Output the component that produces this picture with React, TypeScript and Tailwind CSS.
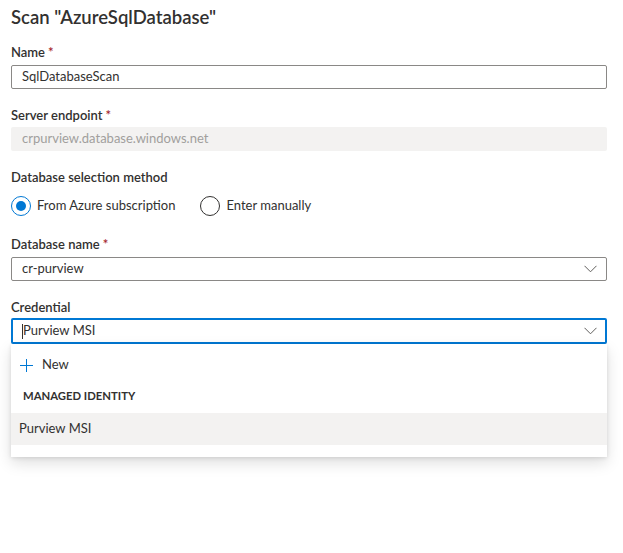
import React from 'react';

const font = { fontFamily: 'Lato, "Segoe UI", sans-serif' };

function Label({ text, required }: { text: string; required?: boolean }) {
  return (
    <div className="h-[20px] leading-[20px] text-[13px] font-semibold text-[#323130]">
      {text}
      {required && <span className="ml-[3px] text-[#a4262c]">*</span>}
    </div>
  );
}

function Chevron() {
  return (
    <svg width="13" height="8" viewBox="0 0 13 8" fill="none" className="shrink-0">
      <path d="M0.5 0.8 L6.5 6.8 L12.5 0.8" stroke="#605e5c" strokeWidth="1" />
    </svg>
  );
}

function Radio({ checked, label }: { checked?: boolean; label: string }) {
  return (
    <label className="flex items-center h-[20px]">
      <span
        className={`w-[20px] h-[20px] rounded-full border flex items-center justify-center shrink-0 ${
          checked ? 'border-[#0078d4]' : 'border-[#323130]'
        }`}
      >
        {checked && <span className="w-[10px] h-[10px] rounded-full bg-[#0078d4]" />}
      </span>
      <span className="ml-[6px] text-[13px] text-[#323130]">{label}</span>
    </label>
  );
}

export default function App() {
  return (
    <div className="w-[623px] h-[553px] bg-white pl-[11px] overflow-hidden" style={font}>
      <h1 className="pt-[3px] text-[18.5px] leading-[28px] font-semibold text-[#323130]">
        Scan "AzureSqlDatabase"
      </h1>

      <div className="mt-[11px]">
        <Label text="Name" required />
      </div>
      <div className="mt-[3px] w-[596px] h-[24px] border border-[#8a8886] rounded-[2px] flex items-center pl-[10px] text-[13px] text-[#323130]">
        SqlDatabaseScan
      </div>

      <div className="mt-[16px]">
        <Label text="Server endpoint" required />
      </div>
      <div className="mt-[2px] w-[596px] h-[24px] bg-[#f3f2f1] rounded-[2px] flex items-center pl-[11px] text-[13px] text-[#a19f9d]">
        crpurview.database.windows.net
      </div>

      <div className="mt-[16px]">
        <Label text="Database selection method" />
      </div>
      <div className="mt-[9px] flex items-center gap-[25px]">
        <Radio checked label="From Azure subscription" />
        <Radio label="Enter manually" />
      </div>

      <div className="mt-[18px]">
        <Label text="Database name" required />
      </div>
      <div className="mt-[3px] w-[596px] h-[24px] border border-[#8a8886] rounded-[2px] flex items-center justify-between pl-[10px] pr-[9px] text-[13px] text-[#323130]">
        <span>cr-purview</span>
        <Chevron />
      </div>

      <div className="mt-[16px]">
        <Label text="Credential" />
      </div>
      <div className="relative w-[596px]">
        <div className="mt-[1px] w-[596px] h-[26px] border-2 border-[#0078d4] rounded-[2px] flex items-center justify-between pl-[9px] pr-[8px] text-[13px] text-[#323130]">
          <span className="flex items-center">
            <span className="w-px h-[15px] bg-[#323130]" />
            <span>Purview MSI</span>
          </span>
          <Chevron />
        </div>

        <div className="w-[596px] bg-white pt-[4px] pb-[12px] shadow-[0_6px_14px_rgba(0,0,0,0.13),0_1px_4px_rgba(0,0,0,0.11)]">
          <div className="h-[34px] flex items-center pl-[9px]">
            <svg width="13" height="13" viewBox="0 0 13 13" fill="none">
              <path d="M6.5 0 V13 M0 6.5 H13" stroke="#0078d4" strokeWidth="1" />
            </svg>
            <span className="ml-[9px] text-[13px] text-[#323130]">New</span>
          </div>
          <div className="h-[31px] flex items-center pb-[3px] pl-[12px] text-[11.3px] font-bold text-[#323130]">
            MANAGED IDENTITY
          </div>
          <div className="h-[32px] flex items-center pl-[8px] bg-[#f3f2f1] text-[13px] text-[#323130]">
            Purview MSI
          </div>
        </div>
      </div>
    </div>
  );
}
